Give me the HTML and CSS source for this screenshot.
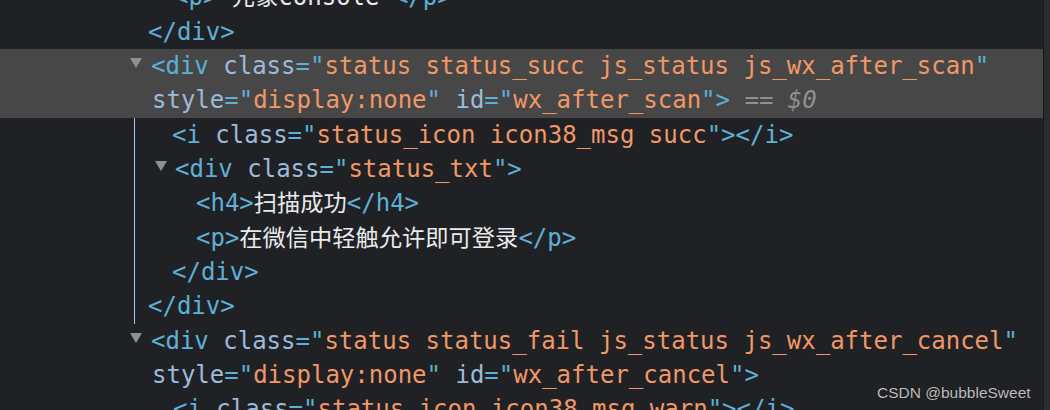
FILE: index.html
```html
<!DOCTYPE html>
<html>
<head>
<meta charset="utf-8">
<link rel="stylesheet" href="styles.css">
</head>
<body>
<div class="panel">
  <div class="tree">
    <div class="line l1t"><span class="tag">&lt;p&gt;</span><span class="txt"> <span class="cjk">元象</span>console </span><span class="tag">&lt;/p&gt;</span></div>
    <div class="line l0"><span class="tag">&lt;/div&gt;</span></div>
    <div class="selected">
      <div class="line o0"><span class="tri"></span><span class="tag">&lt;div</span> <span class="an">class</span><span class="tag">=</span><span class="tag">"</span><span class="av">status status_succ js_status js_wx_after_scan</span><span class="tag">"</span></div>
      <div class="line c0"><span class="an">style</span><span class="tag">=</span><span class="tag">"</span><span class="av">display:none</span><span class="tag">"</span> <span class="an">id</span><span class="tag">=</span><span class="tag">"</span><span class="av">wx_after_scan</span><span class="tag">"</span><span class="tag">&gt;</span> <span class="eq">==</span> <span class="dollar">$0</span></div>
    </div>
    <div class="children">
      <div class="line k1"><span class="tag">&lt;i</span> <span class="an">class</span><span class="tag">=</span><span class="tag">"</span><span class="av">status_icon icon38_msg succ</span><span class="tag">"</span><span class="tag">&gt;&lt;/i&gt;</span></div>
      <div class="line ko1"><span class="tri"></span><span class="tag">&lt;div</span> <span class="an">class</span><span class="tag">=</span><span class="tag">"</span><span class="av">status_txt</span><span class="tag">"</span><span class="tag">&gt;</span></div>
      <div class="line k2"><span class="tag">&lt;h4&gt;</span><span class="txt cjk">扫描成功</span><span class="tag">&lt;/h4&gt;</span></div>
      <div class="line k2"><span class="tag">&lt;p&gt;</span><span class="txt cjk">在微信中轻触允许即可登录</span><span class="tag">&lt;/p&gt;</span></div>
      <div class="line k1"><span class="tag">&lt;/div&gt;</span></div>
      <div class="line kend"><span class="tag">&lt;/div&gt;</span></div>
    </div>
    <div class="line o0"><span class="tri"></span><span class="tag">&lt;div</span> <span class="an">class</span><span class="tag">=</span><span class="tag">"</span><span class="av">status status_fail js_status js_wx_after_cancel</span><span class="tag">"</span></div>
    <div class="line c0"><span class="an">style</span><span class="tag">=</span><span class="tag">"</span><span class="av">display:none</span><span class="tag">"</span> <span class="an">id</span><span class="tag">=</span><span class="tag">"</span><span class="av">wx_after_cancel</span><span class="tag">"</span><span class="tag">&gt;</span></div>
    <div class="line l1"><span class="tag">&lt;i</span> <span class="an">class</span><span class="tag">=</span><span class="tag">"</span><span class="av">status_icon icon38_msg warn</span><span class="tag">"</span><span class="tag">&gt;&lt;/i&gt;</span></div>
  </div>
  <div class="scrollbar"></div>
  <div class="watermark">CSDN @bubbleSweet</div>
</div>
</body>
</html>
```
FILE: styles.css
```css
html, body {
  margin: 0;
  padding: 0;
  background: #202124;
}
body {
  width: 1050px;
  height: 410px;
  overflow: hidden;
}
.panel {
  position: relative;
  display: flex;
  width: 1050px;
  height: 410px;
  overflow: hidden;
  background: #202124;
}
.tree {
  flex: 1;
  margin-top: -19.66px;
  font-family: "DejaVu Sans Mono", "Noto Sans CJK SC", monospace;
  font-size: 24px;
  line-height: 34.33px;
  color: #5db0d7;
}
.line {
  display: block;
  height: 34.33px;
  white-space: pre;
}
.cjk {
  font-family: "Noto Sans CJK SC", sans-serif;
  font-size: 23.25px;
  line-height: 20px;
}
.selected {
  background: #474747;
}
.l0 { padding-left: 148px; }
.l1 { padding-left: 173px; }
.l1t { padding-left: 174px; }
.o0 { padding-left: 130px; }
.c0 { padding-left: 152px; }
.children {
  margin-left: 134px;
  border-left: 1px solid #9fc2f7;
}
.k1 { padding-left: 37px; }
.ko1 { padding-left: 20px; }
.k2 { padding-left: 61px; }
.kend { padding-left: 13px; }
.tri {
  display: inline-block;
  vertical-align: middle;
  width: 0;
  height: 0;
  border-left: 6.5px solid transparent;
  border-right: 6.5px solid transparent;
  border-top: 10px solid #8f9093;
  margin-right: 9px;
  margin-top: -8px;
}
.ko1 .tri {
  border-left-width: 6px;
  border-right-width: 6px;
  margin-right: 8px;
}
.tag { color: #5db0d7; }
.an { color: #9bbbdc; }
.av { color: #f29766; }
.txt { color: #e8eaed; }
.eq { color: #8f9093; }
.dollar { color: #8f9093; font-style: italic; }
.scrollbar {
  width: 6px;
  flex: none;
  background: #2c2c2e;
  border-left: 1px solid #18181a;
}
.watermark {
  position: absolute;
  left: 877px;
  top: 383px;
  font-family: "Liberation Sans", Arial, sans-serif;
  font-size: 15.5px;
  line-height: 20px;
  color: #bdbdbd;
  text-shadow: 0 0 1px rgba(0,0,0,0.4);
}
```
